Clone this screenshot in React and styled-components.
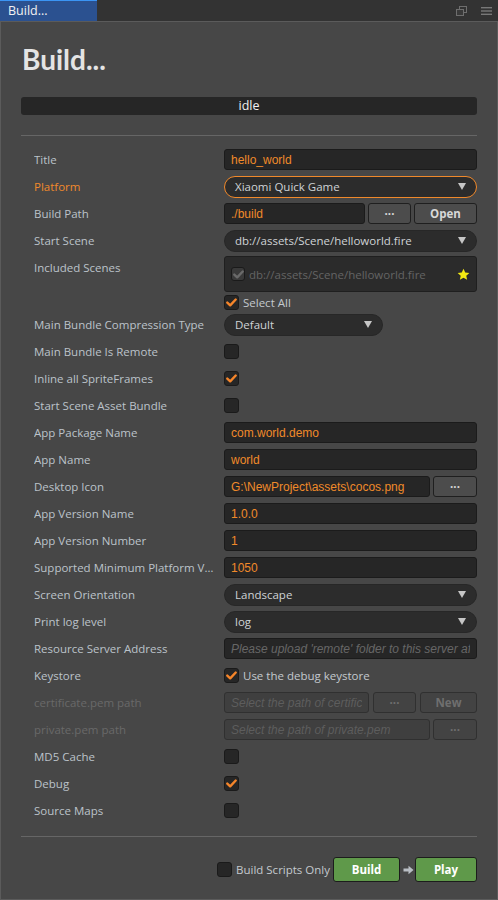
import React from "react";
import styled, { createGlobalStyle } from "styled-components";

const GlobalStyle = createGlobalStyle`
  html, body {
    margin: 0;
    padding: 0;
    background: #474747;
  }
  body {
    font-family: "Open Sans", "Noto Sans", sans-serif;
  }
`;

const Window = styled.div`
  width: 498px;
  height: 900px;
  display: flex;
  flex-direction: column;
  background: #474747;
  overflow: hidden;
`;

const TabBar = styled.div`
  height: 21px;
  display: flex;
  align-items: stretch;
  background: #333333;
`;

const Tab = styled.div`
  box-sizing: border-box;
  width: 97px;
  padding-left: 8px;
  background: #2b5190;
  border-top: 1px solid #3b95f5;
  color: #f2f2f2;
  font-size: 12.5px;
  line-height: 19px;
`;

const TabTools = styled.div`
  flex: 1;
  display: flex;
  justify-content: flex-end;
  align-items: center;
  gap: 14px;
  padding-right: 6px;
`;

const Panel = styled.div`
  flex: 1;
  display: flex;
  flex-direction: column;
  border: 1px solid #5b5b5b;
  padding: 0 20px;
`;

const Heading = styled.h1`
  margin: 23px 0 0 1px;
  font-family: Lato, sans-serif;
  font-weight: 700;
  font-size: 28px;
  line-height: 28px;
  color: #e4e4e4;
`;

const Status = styled.div`
  margin-top: 24px;
  height: 18px;
  border-radius: 3px;
  background: #262626;
  color: #f0f0f0;
  font-size: 12.5px;
  line-height: 18px;
  text-align: center;
`;

const Divider = styled.div`
  height: 1px;
  background: #666666;
  margin-top: ${(p) => p.$top}px;
`;

const Form = styled.div`
  margin-top: 10px;
  display: flex;
  flex-direction: column;
`;

const Row = styled.div`
  display: grid;
  grid-template-columns: 190px minmax(0, 1fr);
  align-items: ${(p) => (p.$top ? "start" : "center")};
  min-height: 27px;
  padding-left: 13px;
`;

const Label = styled.div`
  font-size: 11.5px;
  line-height: 27px;
  padding-right: 8px;
  color: ${(p) => (p.$accent ? "#f0892b" : p.$disabled ? "#696969" : "#bcc3ca")};
  white-space: nowrap;
  overflow: hidden;
  text-overflow: ellipsis;
`;

const FieldGroup = styled.div`
  display: flex;
  min-width: 0;
  gap: ${(p) => p.$gap || 3}px;
`;

const TextField = styled.input`
  box-sizing: border-box;
  flex: 1;
  width: 100%;
  min-width: 0;
  height: 21px;
  margin: 0;
  padding: 0 6px;
  background: #262626;
  border: 1px solid #1b1b1b;
  border-radius: 3px;
  color: #f08a2a;
  font: 12px "Liberation Sans", Arial, sans-serif;
  outline: none;

  &::placeholder {
    color: #666666;
    font-style: italic;
  }

  &:disabled {
    background: #3f3f3f;
    border-color: #303030;
  }

  &:disabled::placeholder {
    color: #5d5d5d;
  }
`;

const Button = styled.button`
  box-sizing: border-box;
  flex: none;
  width: ${(p) => p.$w}px;
  height: 21px;
  margin: 0;
  padding: 0;
  background: #4c4c4c;
  border: 1px solid #1f1f1f;
  border-radius: 3px;
  color: #d8d8d8;
  font: 700 11.5px "Open Sans", sans-serif;

  &:disabled {
    background: #434343;
    border-color: #303030;
    color: #6f6f6f;
  }
`;

const Select = styled.div`
  box-sizing: border-box;
  width: ${(p) => (p.$w ? `${p.$w}px` : "auto")};
  height: 22px;
  display: flex;
  align-items: center;
  justify-content: space-between;
  padding: 0 10px;
  background: #2c2c2c;
  border: 1px solid ${(p) => (p.$accent ? "#f0892b" : "#272727")};
  border-radius: 11px;
  color: #cfd3d6;
  font-size: 11.5px;
`;

const Caret = styled.span`
  width: 0;
  height: 0;
  border-left: 4px solid transparent;
  border-right: 4px solid transparent;
  border-top: 7px solid #c6c6c6;
`;

const Box = styled.span`
  box-sizing: border-box;
  flex: none;
  width: ${(p) => p.$size || 15}px;
  height: ${(p) => p.$size || 15}px;
  display: inline-flex;
  align-items: center;
  justify-content: center;
  background: ${(p) => (p.$disabled ? "#3a3a3a" : "#262626")};
  border: 1px solid #1a1a1a;
  border-radius: 3px;
`;

const ScenesBox = styled.div`
  box-sizing: border-box;
  margin-top: 2px;
  height: 36px;
  display: flex;
  align-items: center;
  gap: 4px;
  padding: 0 6px;
  background: #2b2b2b;
  border: 1px solid #1f1f1f;
  border-radius: 3px;
`;

const SceneName = styled.span`
  flex: 1;
  color: #646464;
  font-size: 11.5px;
`;

const CheckLine = styled.label`
  display: flex;
  align-items: center;
  gap: 4px;
  height: ${(p) => p.$h || 15}px;
  margin-top: ${(p) => p.$top || 0}px;
  color: #c4c9ce;
  font-size: 11.5px;
`;

const Footer = styled.div`
  margin-top: 20px;
  display: flex;
  justify-content: flex-end;
  align-items: center;
`;

const ScriptsOnly = styled(CheckLine)`
  margin-right: 3px;
`;

const GoButton = styled.button`
  box-sizing: border-box;
  width: ${(p) => p.$w}px;
  height: 25px;
  margin: 0;
  background: #5f994a;
  border: 1px solid #1c1c1c;
  border-radius: 3px;
  color: #ffffff;
  font: 700 11.5px "Open Sans", sans-serif;
`;

const Arrow = styled.svg`
  margin: 0 1px 0 3px;
`;

const Check = ({ color = "#f5852a" }) => (
  <svg width="11" height="9" viewBox="0 0 11 9">
    <path d="M1.3 4.6 L4.2 7.3 L9.7 1.5" fill="none" stroke={color} strokeWidth="2.4" strokeLinecap="round" strokeLinejoin="round" />
  </svg>
);

const CheckBox = ({ checked, disabled, size }) => (
  <Box $disabled={disabled} $size={size}>
    {checked && <Check color={disabled ? "#6a6a6a" : "#f5852a"} />}
  </Box>
);

const Star = () => (
  <svg width="13" height="13" viewBox="0 0 24 24">
    <path d="M12 1.5l3.2 7 7.6.8-5.7 5.1 1.6 7.5L12 18l-6.7 3.9 1.6-7.5L1.2 9.3l7.6-.8z" fill="#f4ea12" />
  </svg>
);

export default function App() {
  return (
    <Window>
      <GlobalStyle />
      <TabBar>
        <Tab>Build...</Tab>
        <TabTools>
          <svg width="11" height="10" viewBox="0 0 11 10">
            <rect x="3.5" y="0.5" width="7" height="6" fill="none" stroke="#6e6e6e" />
            <rect x="0.5" y="3.5" width="7" height="6" fill="#3a3a3a" stroke="#6e6e6e" />
          </svg>
          <svg width="11" height="8" viewBox="0 0 11 8">
            <rect x="0" y="0" width="11" height="1.4" fill="#787878" />
            <rect x="0" y="3.3" width="11" height="1.4" fill="#787878" />
            <rect x="0" y="6.6" width="11" height="1.4" fill="#787878" />
          </svg>
        </TabTools>
      </TabBar>

      <Panel>
        <Heading>Build...</Heading>
        <Status>idle</Status>
        <Divider $top={20} />

        <Form>
          <Row>
            <Label>Title</Label>
            <TextField defaultValue="hello_world" />
          </Row>
          <Row>
            <Label $accent>Platform</Label>
            <Select $accent>
              Xiaomi Quick Game <Caret />
            </Select>
          </Row>
          <Row>
            <Label>Build Path</Label>
            <FieldGroup>
              <TextField defaultValue="./build" />
              <Button $w={43}>···</Button>
              <Button $w={63}>Open</Button>
            </FieldGroup>
          </Row>
          <Row>
            <Label>Start Scene</Label>
            <Select>
              db://assets/Scene/helloworld.fire <Caret />
            </Select>
          </Row>
          <Row $top>
            <Label>Included Scenes</Label>
            <div>
              <ScenesBox>
                <CheckBox checked disabled size={14} />
                <SceneName>db://assets/Scene/helloworld.fire</SceneName>
                <Star />
              </ScenesBox>
              <CheckLine $top={2} $h={17}>
                <CheckBox checked />
                Select All
              </CheckLine>
            </div>
          </Row>
          <Row>
            <Label>Main Bundle Compression Type</Label>
            <Select $w={159}>
              Default <Caret />
            </Select>
          </Row>
          <Row>
            <Label>Main Bundle Is Remote</Label>
            <CheckLine>
              <CheckBox />
            </CheckLine>
          </Row>
          <Row>
            <Label>Inline all SpriteFrames</Label>
            <CheckLine>
              <CheckBox checked />
            </CheckLine>
          </Row>
          <Row>
            <Label>Start Scene Asset Bundle</Label>
            <CheckLine>
              <CheckBox />
            </CheckLine>
          </Row>
          <Row>
            <Label>App Package Name</Label>
            <TextField defaultValue="com.world.demo" />
          </Row>
          <Row>
            <Label>App Name</Label>
            <TextField defaultValue="world" />
          </Row>
          <Row>
            <Label>Desktop Icon</Label>
            <FieldGroup>
              <TextField defaultValue="G:\NewProject\assets\cocos.png" />
              <Button $w={44}>···</Button>
            </FieldGroup>
          </Row>
          <Row>
            <Label>App Version Name</Label>
            <TextField defaultValue="1.0.0" />
          </Row>
          <Row>
            <Label>App Version Number</Label>
            <TextField defaultValue="1" />
          </Row>
          <Row>
            <Label>Supported Minimum Platform Version</Label>
            <TextField defaultValue="1050" />
          </Row>
          <Row>
            <Label>Screen Orientation</Label>
            <Select>
              Landscape <Caret />
            </Select>
          </Row>
          <Row>
            <Label>Print log level</Label>
            <Select>
              log <Caret />
            </Select>
          </Row>
          <Row>
            <Label>Resource Server Address</Label>
            <TextField placeholder="Please upload 'remote' folder to this server after build" />
          </Row>
          <Row>
            <Label>Keystore</Label>
            <CheckLine>
              <CheckBox checked />
              Use the debug keystore
            </CheckLine>
          </Row>
          <Row>
            <Label $disabled>certificate.pem path</Label>
            <FieldGroup $gap={4}>
              <TextField disabled placeholder="Select the path of certificate.pem" />
              <Button $w={43} disabled>···</Button>
              <Button $w={57} disabled>New</Button>
            </FieldGroup>
          </Row>
          <Row>
            <Label $disabled>private.pem path</Label>
            <FieldGroup>
              <TextField disabled placeholder="Select the path of private.pem" />
              <Button $w={44} disabled>···</Button>
            </FieldGroup>
          </Row>
          <Row>
            <Label>MD5 Cache</Label>
            <CheckLine>
              <CheckBox />
            </CheckLine>
          </Row>
          <Row>
            <Label>Debug</Label>
            <CheckLine>
              <CheckBox checked />
            </CheckLine>
          </Row>
          <Row>
            <Label>Source Maps</Label>
            <CheckLine>
              <CheckBox />
            </CheckLine>
          </Row>
        </Form>

        <Divider $top={12} />

        <Footer>
          <ScriptsOnly>
            <CheckBox />
            Build Scripts Only
          </ScriptsOnly>
          <GoButton $w={67}>Build</GoButton>
          <Arrow width="11" height="10" viewBox="0 0 11 10">
            <path d="M0.5 3.5 H5.5 V0.8 L10.5 5 L5.5 9.2 V6.5 H0.5 Z" fill="#b9bec4" />
          </Arrow>
          <GoButton $w={62}>Play</GoButton>
        </Footer>
      </Panel>
    </Window>
  );
}
